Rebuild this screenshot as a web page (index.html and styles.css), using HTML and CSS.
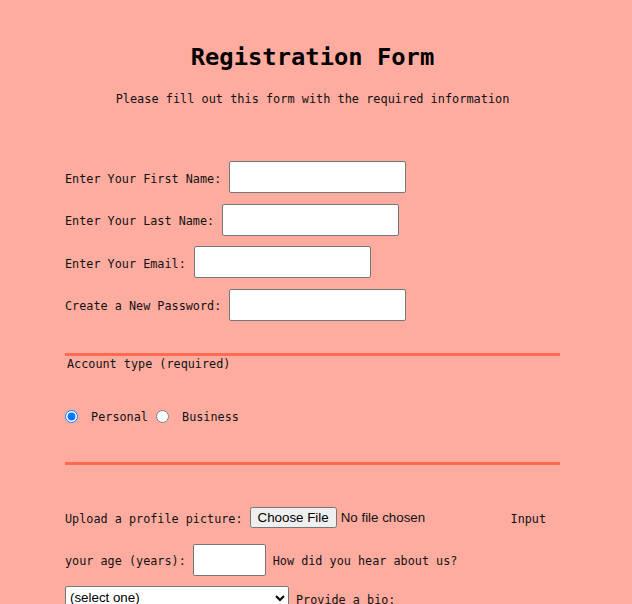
FILE: index.html
```html
<!DOCTYPE html>
<html>
<head>
<meta charset="utf-8">
<title>Registration Form</title>
<link rel="stylesheet" href="styles.css">
</head>
<body>
<main class="page">
  <h1 class="title">Registration Form</h1>
  <p class="subtitle">Please fill out this form with the required information</p>
  <form class="form">
    <div class="fields">
      <label class="row"><span class="lbl">Enter Your First Name: </span><input class="text" type="text"></label>
      <label class="row"><span class="lbl">Enter Your Last Name: </span><input class="text" type="text"></label>
      <label class="row"><span class="lbl">Enter Your Email: </span><input class="text" type="email"></label>
      <label class="row"><span class="lbl">Create a New Password: </span><input class="text" type="password"></label>
    </div>
    <div class="account">
      <div class="legend">Account type (required)</div>
      <div class="radios">
        <label class="radio"><input type="radio" name="acct" checked> Personal</label>
        <label class="radio"><input type="radio" name="acct"> Business</label>
      </div>
    </div>
    <div class="extra">
      <div class="row upload">
        <span class="lbl">Upload a profile picture:</span>
        <input class="file" type="file">
        <span class="lbl input-word">Input</span>
      </div>
      <div class="row">
        <span class="lbl">your age (years):</span>
        <input class="age" type="number">
        <span class="lbl">How did you hear about us?</span>
      </div>
      <div class="row select-row">
        <select class="select"><option>(select one)</option></select>
        <span>Provide a bio:</span>
      </div>
    </div>
  </form>
</main>
</body>
</html>
```
FILE: styles.css
```css
html, body {
  margin: 0;
  padding: 0;
  background: #ffaca0;
  color: #111;
  overflow: hidden;
}
body {
  font-family: "DejaVu Sans Mono", "Liberation Mono", monospace;
  font-size: 11.8px;
  height: 604px;
}
.page {
  margin-left: 65px;
  width: 495px;
}
.title {
  margin: 43px 0 0;
  font-size: 23.8px;
  line-height: 28px;
  text-align: center;
  font-weight: bold;
  color: #000;
}
.subtitle {
  margin: 20px 0 0;
  font-size: 11.9px;
  line-height: 16px;
  text-align: center;
}
.form {
  margin: 0;
}
.fields {
  margin-top: 54px;
  display: flex;
  flex-direction: column;
  gap: 10.67px;
}
.row {
  display: flex;
  align-items: center;
  height: 32px;
  white-space: pre;
}
.lbl {
  padding-top: 3px;
}
.text {
  box-sizing: border-box;
  width: 177px;
  height: 32px;
  margin: 0 0 0 1px;
  border: 1px solid #767676;
  border-radius: 2px;
  background: #fff;
}
.account {
  margin-top: 32px;
  border-top: 3px solid #ff6a50;
  border-bottom: 3px solid #ff6a50;
  height: 106px;
}
.legend {
  padding-left: 2px;
  line-height: 16px;
}
.radios {
  margin-top: 38px;
  display: flex;
  align-items: center;
  gap: 8px;
}
.radio {
  display: flex;
  align-items: center;
  white-space: pre;
}
.radio input {
  width: 13px;
  height: 13px;
  margin: 0 6px 0 0;
}
.extra {
  margin-top: 37px;
  display: flex;
  flex-direction: column;
  gap: 10px;
}
.upload {
  height: 32px;
}
.file {
  margin-left: 7px;
  font-family: Arial, "Liberation Sans", sans-serif;
  font-size: 13.33px;
}
.input-word {
  margin-left: 8px;
}
.age {
  box-sizing: border-box;
  width: 73px;
  height: 32px;
  margin: 0 7px 0 7px;
  border: 1px solid #767676;
  border-radius: 2px;
  background: #fff;
}
.select-row {
  align-items: flex-start;
  height: 24px;
}
.select {
  width: 224px;
  height: 24px;
  margin: 0 7px 0 0;
  font-family: Arial, "Liberation Sans", sans-serif;
  font-size: 13.33px;
  border: 1px solid #767676;
  border-radius: 2px;
  background: #fff;
}
.select-row span {
  line-height: 24px;
  padding-top: 2px;
}
```
